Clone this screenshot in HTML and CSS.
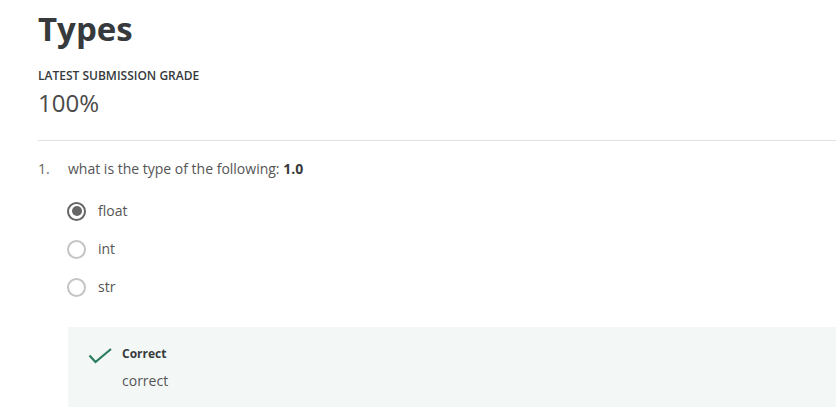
FILE: index.html
```html
<!DOCTYPE html>
<html lang="en">
<head>
<meta charset="utf-8">
<title>Types</title>
<link rel="stylesheet" href="styles.css">
</head>
<body>
<main class="page">
  <header class="head">
    <h1 class="title">Types</h1>
    <div class="grade-label">LATEST SUBMISSION GRADE</div>
    <div class="grade">100%</div>
  </header>
  <section class="question">
    <div class="q-row">
      <span class="q-num">1.</span>
      <div class="q-body">
        <p class="q-text">what is the type of the following: <strong>1.0</strong></p>
        <ul class="options">
          <li class="option"><span class="radio checked"></span><span class="opt-label">float</span></li>
          <li class="option"><span class="radio"></span><span class="opt-label">int</span></li>
          <li class="option"><span class="radio"></span><span class="opt-label">str</span></li>
        </ul>
        <div class="feedback">
          <svg class="check" width="24" height="16" viewBox="0 0 24 16"><polyline points="1.5,7.5 7.5,14 23,1" fill="none" stroke="#2a7c5b" stroke-width="2.2"/></svg>
          <div class="fb-text">
            <div class="fb-title">Correct</div>
            <div class="fb-body">correct</div>
          </div>
        </div>
      </div>
    </div>
  </section>
</main>
</body>
</html>
```
FILE: styles.css
```css
html, body {
  margin: 0;
  padding: 0;
  background: #fff;
}
body {
  font-family: "Open Sans", "DejaVu Sans", sans-serif;
  color: #373a3c;
}
.page {
  padding-left: 38px;
}
.head {
  border-bottom: 1px solid #e1e1e1;
  padding-bottom: 21px;
}
.title {
  margin: 9px 0 0;
  font-size: 33px;
  line-height: 40px;
  font-weight: 700;
  color: #373a3c;
}
.grade-label {
  margin-top: 19px;
  font-size: 12px;
  line-height: 16px;
  font-weight: 600;
  color: #373a3c;
}
.grade {
  margin-top: 3px;
  font-size: 24px;
  line-height: 32px;
  font-weight: 400;
  color: #4a4a4a;
}
.question {
  padding-top: 18px;
}
.q-row {
  display: flex;
}
.q-num {
  width: 30px;
  flex: none;
  font-size: 14px;
  line-height: 20px;
  color: #666;
}
.q-body {
  flex: 1;
}
.q-text {
  margin: 0;
  font-size: 14px;
  line-height: 20px;
  color: #555;
}
.q-text strong {
  color: #373a3c;
}
.options {
  list-style: none;
  margin: 13px 0 0;
  padding: 0;
}
.option {
  display: flex;
  align-items: center;
  height: 38px;
}
.radio {
  box-sizing: border-box;
  width: 19px;
  height: 19px;
  margin-left: -1px;
  border: 2px solid #c4c4c4;
  border-radius: 50%;
  display: flex;
  align-items: center;
  justify-content: center;
  flex: none;
}
.radio.checked {
  border-color: #666;
}
.radio.checked::after {
  content: "";
  width: 10px;
  height: 10px;
  border-radius: 50%;
  background: #666;
}
.opt-label {
  margin-left: 12px;
  font-size: 14px;
  line-height: 20px;
  color: #555;
}
.feedback {
  margin-top: 21px;
  height: 80px;
  box-sizing: border-box;
  background: #f3f8f7;
  display: flex;
  align-items: flex-start;
  padding: 19px 0 0 20px;
}
.check {
  flex: none;
  margin-top: 2px;
}
.fb-text {
  margin-left: 10px;
}
.fb-title {
  font-size: 12px;
  line-height: 16px;
  font-weight: 700;
  color: #373a3c;
}
.fb-body {
  margin-top: 9px;
  font-size: 14px;
  line-height: 20px;
  color: #555;
}
```
